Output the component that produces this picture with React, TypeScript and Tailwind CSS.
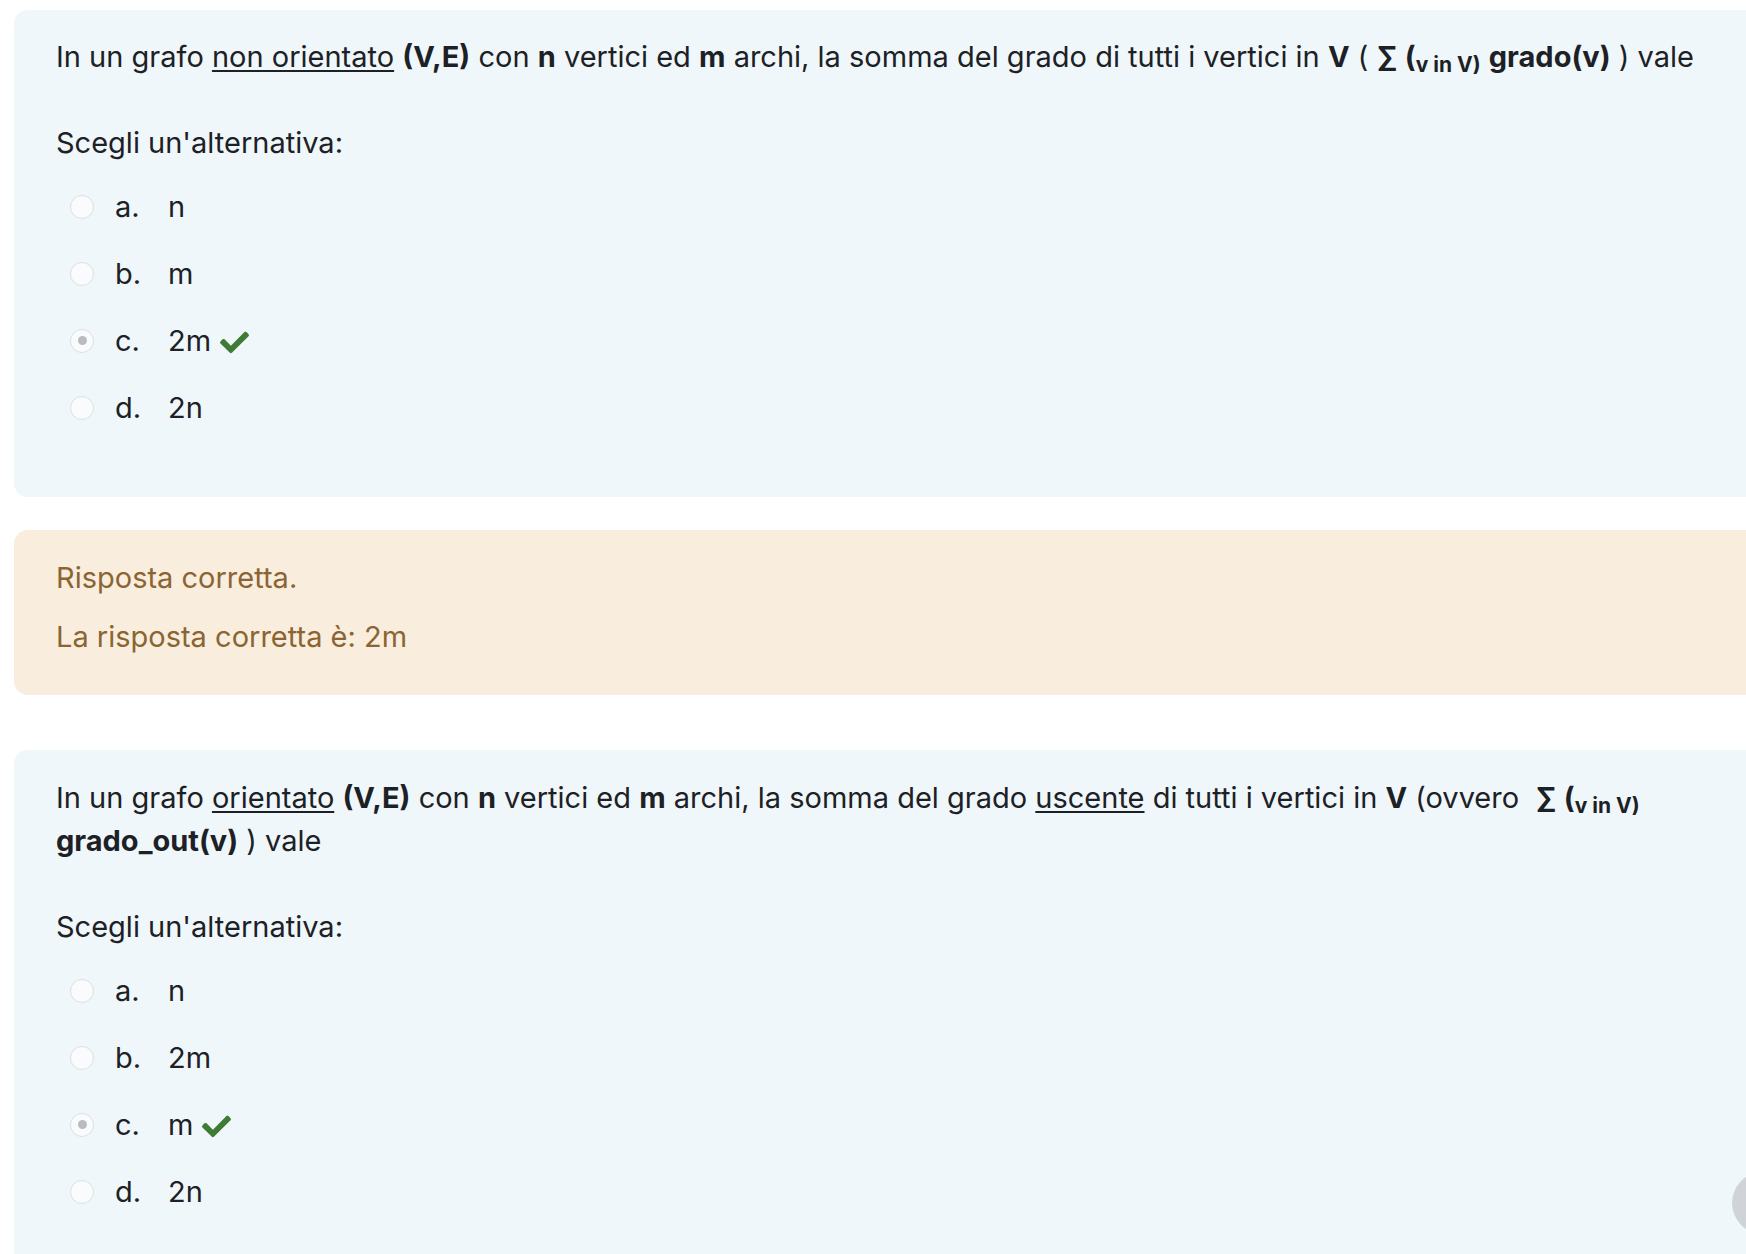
import React from 'react';

type Option = { letter: string; text: string; checked?: boolean };

const Radio = ({ checked }: { checked?: boolean }) => (
  <span className="flex h-[24px] w-[24px] shrink-0 items-center justify-center rounded-full border border-[#dcdfe2] bg-[#f9fbfc]">
    {checked && <span className="h-[9px] w-[9px] rounded-full bg-[#b9bcbf]" />}
  </span>
);

const Check = () => (
  <svg className="ml-[9px] h-[26px] w-[29px] text-[#3e7b35]" viewBox="0 0 512 460" fill="currentColor">
    <path d="M173.9 439.4l-166.4-166.4c-10-10-10-26.2 0-36.2l36.2-36.2c10-10 26.2-10 36.2 0L192 312.7 432.1 72.6c10-10 26.2-10 36.2 0l36.2 36.2c10 10 10 26.2 0 36.2l-294.4 294.4c-10 10-26.2 10-36.2 0z" />
  </svg>
);

const Options = ({ options }: { options: Option[] }) => (
  <div className="mt-[21px] flex flex-col gap-[24px] pl-[14px]">
    {options.map((o) => (
      <div key={o.letter} className="flex h-[43px] items-center">
        <Radio checked={o.checked} />
        <span className="ml-[21px] w-[53px]">{o.letter}.</span>
        <span>{o.text}</span>
        {o.checked && <Check />}
      </div>
    ))}
  </div>
);

const Sum = () => (
  <b className="font-bold">
    ∑ (<sub className="text-[21px]">v in V)</sub>
  </b>
);

export default function App() {
  return (
    <div
      className="relative h-[1254px] w-[1746px] overflow-hidden bg-white text-[29px] leading-[43px] text-[#1d2125]"
      style={{ fontFamily: 'Inter, "Noto Sans", sans-serif' }}
    >
      <div className="ml-[14px] mt-[10px] w-[1900px] rounded-[14px] bg-[#eff7fb] pb-[68px] pl-[42px] pt-[25px]">
        <p>
          In un grafo <span className="underline underline-offset-[3px]">non orientato</span>{' '}
          <b className="font-bold">(V,E)</b> con <b className="font-bold">n</b> vertici ed{' '}
          <b className="font-bold">m</b> archi, la somma del grado di tutti i vertici in{' '}
          <b className="font-bold">V</b> ( <Sum /> <b className="font-bold">grado(v)</b> ) vale
        </p>
        <p className="mt-[43px]">Scegli un'alternativa:</p>
        <Options
          options={[
            { letter: 'a', text: 'n' },
            { letter: 'b', text: 'm' },
            { letter: 'c', text: '2m', checked: true },
            { letter: 'd', text: '2n' },
          ]}
        />
      </div>

      <div className="ml-[14px] mt-[33px] w-[1900px] rounded-[14px] bg-[#f9eddd] pb-[37px] pl-[42px] pt-[26px] text-[#8a6533]">
        <p>Risposta corretta.</p>
        <p className="mt-[16px]">La risposta corretta è: 2m</p>
      </div>

      <div className="ml-[14px] mt-[55px] w-[1900px] rounded-[14px] bg-[#eff7fb] pb-[68px] pl-[42px] pt-[26px]">
        <p>
          In un grafo <span className="underline underline-offset-[3px]">orientato</span>{' '}
          <b className="font-bold">(V,E)</b> con <b className="font-bold">n</b> vertici ed{' '}
          <b className="font-bold">m</b> archi, la somma del grado{' '}
          <span className="underline underline-offset-[3px]">uscente</span> di tutti i vertici in{' '}
          <b className="font-bold">V</b> (ovvero&nbsp; <Sum />
          <br />
          <b className="font-bold">grado_out(v)</b> ) vale
        </p>
        <p className="mt-[43px]">Scegli un'alternativa:</p>
        <Options
          options={[
            { letter: 'a', text: 'n' },
            { letter: 'b', text: '2m' },
            { letter: 'c', text: 'm', checked: true },
            { letter: 'd', text: '2n' },
          ]}
        />
      </div>

      <div className="absolute left-[1732px] top-[1172px] h-[62px] w-[62px] rounded-full bg-[#d0d4d8]" />
    </div>
  );
}
